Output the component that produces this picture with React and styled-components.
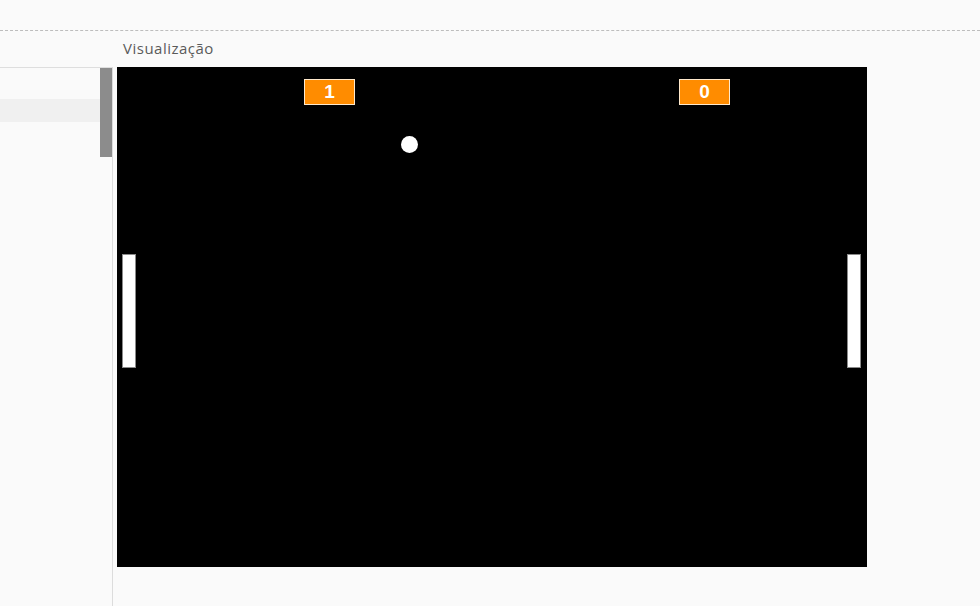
import React from "react";
import styled, { createGlobalStyle } from "styled-components";

const Global = createGlobalStyle`
  html, body {
    margin: 0;
    padding: 0;
    background: #fafafa;
    font-family: "Open Sans", "Liberation Sans", sans-serif;
  }
  * { box-sizing: border-box; }
`;

const Page = styled.div`
  width: 980px;
  height: 606px;
  overflow: hidden;
  background: #fafafa;
`;

const TopBar = styled.div`
  height: 31px;
  border-bottom: 1px dashed #bdbdbd;
`;

const Body = styled.div`
  display: grid;
  grid-template-columns: 113px 1fr;
  grid-template-rows: 36px 1fr;
  height: 575px;
`;

const Heading = styled.div`
  grid-column: 2;
  padding: 7px 0 0 10px;
  font-size: 15px;
  color: #5a5a5a;
  letter-spacing: 0.5px;
`;

const SidePanel = styled.div`
  grid-column: 1;
  grid-row: 2;
  position: relative;
  border-top: 1px solid #dedede;
  border-right: 1px solid #dcdcdc;
  padding-top: 31px;
  padding-right: 12px;
`;

const SideRow = styled.div`
  height: 23px;
  background: ${(p) => (p.$active ? "#f0f0f0" : "transparent")};
`;

// scrollbar thumb sits over the panel's right edge
const ScrollThumb = styled.div`
  position: absolute;
  top: 0;
  right: 0;
  width: 12px;
  height: 89px;
  background: #8c8c8c;
`;

const Stage = styled.div`
  grid-column: 2;
  grid-row: 2;
  padding-left: 4px;
`;

const Board = styled.div`
  position: relative;
  width: 750px;
  height: 500px;
  background: #000;
`;

const Score = styled.div`
  position: absolute;
  top: 12px;
  width: 51px;
  height: 26px;
  background: #ff8c00;
  border: 1px solid #ffe9cc;
  color: #fff;
  font-family: "Liberation Sans", Arial, sans-serif;
  font-weight: bold;
  font-size: 19px;
  line-height: 24px;
  text-align: center;
`;

const Paddle = styled.div`
  position: absolute;
  top: 187px;
  width: 14px;
  height: 114px;
  background: #fff;
  border: 1px solid #8a8a8a;
`;

const Ball = styled.div`
  position: absolute;
  width: 17px;
  height: 17px;
  border-radius: 50%;
  background: #fff;
`;

const game = {
  scores: [
    { value: 1, x: 187 },
    { value: 0, x: 562 },
  ],
  ball: { x: 284, y: 69 },
  paddles: [5, 730],
};

export default function App() {
  return (
    <Page>
      <Global />
      <TopBar />
      <Body>
        <Heading>Visualização</Heading>
        <SidePanel>
          <SideRow $active />
          <ScrollThumb />
        </SidePanel>
        <Stage>
          <Board>
            {game.scores.map((s) => (
              <Score key={s.x} style={{ left: s.x }}>
                {s.value}
              </Score>
            ))}
            <Ball style={{ left: game.ball.x, top: game.ball.y }} />
            {game.paddles.map((x) => (
              <Paddle key={x} style={{ left: x }} />
            ))}
          </Board>
        </Stage>
      </Body>
    </Page>
  );
}
